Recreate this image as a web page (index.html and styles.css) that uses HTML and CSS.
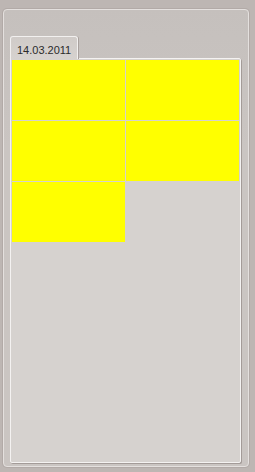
FILE: index.html
```html
<!DOCTYPE html>
<html>
<head>
<meta charset="utf-8">
<link rel="stylesheet" href="styles.css">
</head>
<body>
<div class="frame">
  <div class="tab">14.03.2011</div>
  <div class="panel">
    <div class="grid">
      <div class="cell"></div>
      <div class="cell"></div>
      <div class="cell"></div>
      <div class="cell"></div>
      <div class="cell"></div>
    </div>
  </div>
</div>
</body>
</html>
```
FILE: styles.css
```css
html, body {
  margin: 0;
  padding: 0;
  background: #bdb6b3;
  font-family: "Liberation Sans", Arial, sans-serif;
}
body {
  width: 255px;
  height: 472px;
  overflow: hidden;
}
.frame {
  box-sizing: border-box;
  margin: 9px 0 0 3px;
  width: 246px;
  height: 458px;
  border: 1px solid #e4e0de;
  border-radius: 4px;
  background: linear-gradient(#c5c0bd, #cac5c2 30%, #cac5c2);
  box-shadow: 0 0 0 1px #b2aaa7;
  padding: 26px 7px 3px 6px;
  display: flex;
  flex-direction: column;
}
.tab {
  position: relative;
  z-index: 1;
  align-self: flex-start;
  box-sizing: border-box;
  width: 68px;
  height: 23px;
  margin-bottom: -1px;
  padding: 8px 0 0 6px;
  font-size: 11px;
  line-height: 11px;
  color: #2b2b2b;
  background: linear-gradient(#d0cbc8, #d6d2cf);
  border: 1px solid #f2f0ef;
  border-bottom: none;
  border-radius: 3px 3px 0 0;
  box-shadow: 1px 0 0 #a9a19e;
}
.panel {
  flex: 1;
  box-sizing: border-box;
  background: #d6d2cf;
  border: 1px solid #f4f2f1;
  border-radius: 0 2px 2px 2px;
  box-shadow: 1px 1px 0 #a39b98;
  padding: 1px;
}
.grid {
  display: grid;
  grid-template-columns: 113px 113px;
  grid-auto-rows: 60px;
  gap: 1px;
}
.cell {
  background: #ffff00;
}
```
